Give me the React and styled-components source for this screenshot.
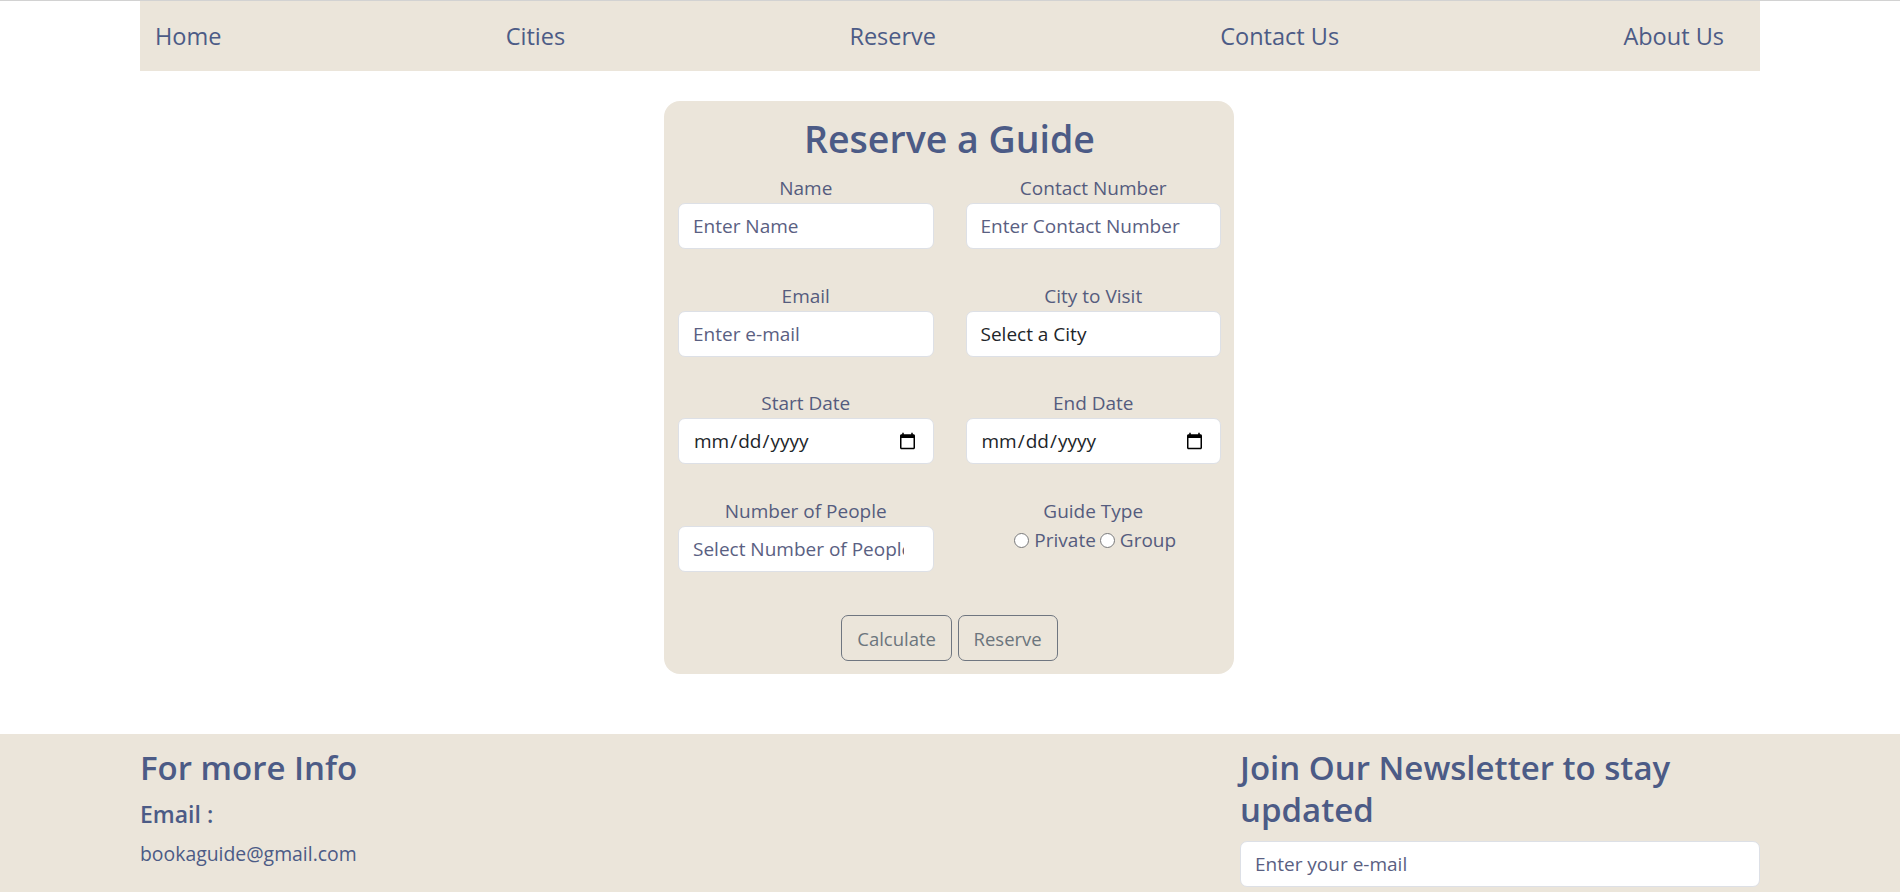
import React from 'react';
import styled, { createGlobalStyle } from 'styled-components';

const beige = '#ebe5da';
const slate = '#4c5b86';

const GlobalStyle = createGlobalStyle`
  body {
    margin: 0;
    border-top: 1px solid #d2d2d2;
    background: #fff;
    font-family: "Open Sans", "Noto Sans", sans-serif;
    font-size: 19px;
    line-height: 1.5;
    color: ${slate};
  }
  * { box-sizing: border-box; }
`;

const NavBar = styled.nav`
  max-width: 1620px;
  height: 70px;
  margin: 0 auto;
  padding: 2px 36px 0 15px;
  background: ${beige};
  display: flex;
  align-items: center;
  justify-content: space-between;
`;

const NavLink = styled.a`
  font-size: 23.5px;
  color: ${slate};
  text-decoration: none;
  cursor: pointer;
`;

const Main = styled.main`
  padding: 30px 2px 60px 0;
`;

const Card = styled.form`
  width: 570px;
  margin: 0 auto;
  padding: 14px 13px 13px 14px;
  background: ${beige};
  border-radius: 16px;
`;

const Title = styled.h1`
  margin: 0 0 11px;
  text-align: center;
  font-size: 37.5px;
  font-weight: 600;
  line-height: 48px;
  color: ${slate};
`;

const FieldGrid = styled.div`
  display: grid;
  grid-template-columns: 1fr 1fr;
  column-gap: 32px;
  row-gap: 32.6px;
`;

const Field = styled.div`
  display: flex;
  flex-direction: column;
`;

const Label = styled.label`
  text-align: center;
  line-height: 29px;
  font-size: 19px;
  color: #555c7e;
`;

const Input = styled.input`
  height: 46px;
  width: 100%;
  padding: 0 14px;
  border: 1px solid #dde0e6;
  border-radius: 7px;
  background: #fff;
  font-family: inherit;
  font-size: 19px;
  color: #212529;
  outline: none;
  &::placeholder { color: #5a6082; opacity: 1; }
`;

const Select = styled.select`
  height: 46px;
  width: 100%;
  padding: 0 14px;
  border: 1px solid #dde0e6;
  border-radius: 7px;
  background: #fff;
  font-family: inherit;
  font-size: 19px;
  color: #212529;
  appearance: none;
  outline: none;
`;

const RadioRow = styled.div`
  display: flex;
  justify-content: center;
  align-items: center;
  font-size: 19px;
  line-height: 29px;
  color: #555c7e;
  label { display: inline-flex; align-items: center; }
  input { margin: 0 5px 0 4px; width: 15px; height: 15px; }
`;

const ButtonRow = styled.div`
  margin-top: 43px;
  display: flex;
  justify-content: center;
  gap: 5.5px;
`;

const OutlineButton = styled.button`
  height: 46.5px;
  padding: 0 15px;
  border: 1px solid #6f7680;
  border-radius: 7px;
  background: transparent;
  font-family: inherit;
  font-size: 18.5px;
  color: #6c757d;
  cursor: pointer;
`;

const Footer = styled.footer`
  background: ${beige};
  padding: 13px 0 24px;
`;

const FooterInner = styled.div`
  max-width: 1620px;
  margin: 0 auto;
  display: grid;
  grid-template-columns: 1fr 520px;
`;

const FooterCol = styled.div`
  display: flex;
  flex-direction: column;
  gap: ${p => p.$gap}px;
`;

const FooterHeading = styled.h2`
  margin: 0;
  font-size: 33px;
  font-weight: 600;
  line-height: 41.5px;
  color: ${slate};
`;

const FooterSub = styled.h4`
  margin: 0;
  font-size: 23px;
  font-weight: 600;
  line-height: 28.8px;
  color: ${slate};
`;

const FooterText = styled.p`
  margin: 0;
  line-height: 28.8px;
  font-size: 19.4px;
  color: ${slate};
`;

export default function App() {
  const links = ['Home', 'Cities', 'Reserve', 'Contact Us', 'About Us'];
  return (
    <>
      <GlobalStyle />
      <NavBar>
        {links.map(l => <NavLink key={l}>{l}</NavLink>)}
      </NavBar>
      <Main>
        <Card onSubmit={e => e.preventDefault()}>
          <Title>Reserve a Guide</Title>
          <FieldGrid>
            <Field>
              <Label>Name</Label>
              <Input type="text" placeholder="Enter Name" />
            </Field>
            <Field>
              <Label>Contact Number</Label>
              <Input type="text" placeholder="Enter Contact Number" />
            </Field>
            <Field>
              <Label>Email</Label>
              <Input type="email" placeholder="Enter e-mail" />
            </Field>
            <Field>
              <Label>City to Visit</Label>
              <Select defaultValue="">
                <option value="">Select a City</option>
              </Select>
            </Field>
            <Field>
              <Label>Start Date</Label>
              <Input type="date" />
            </Field>
            <Field>
              <Label>End Date</Label>
              <Input type="date" />
            </Field>
            <Field>
              <Label>Number of People</Label>
              <Input type="number" placeholder="Select Number of People" />
            </Field>
            <Field>
              <Label>Guide Type</Label>
              <RadioRow>
                <label><input type="radio" name="guide" />Private</label>
                <label><input type="radio" name="guide" />Group</label>
              </RadioRow>
            </Field>
          </FieldGrid>
          <ButtonRow>
            <OutlineButton type="button">Calculate</OutlineButton>
            <OutlineButton type="submit">Reserve</OutlineButton>
          </ButtonRow>
        </Card>
      </Main>
      <Footer>
        <FooterInner>
          <FooterCol $gap={11}>
            <FooterHeading>For more Info</FooterHeading>
            <FooterSub>Email :</FooterSub>
            <FooterText>bookaguide@gmail.com</FooterText>
          </FooterCol>
          <FooterCol $gap={11}>
            <FooterHeading>Join Our Newsletter to stay updated</FooterHeading>
            <Input type="email" placeholder="Enter your e-mail" />
          </FooterCol>
        </FooterInner>
      </Footer>
    </>
  );
}
